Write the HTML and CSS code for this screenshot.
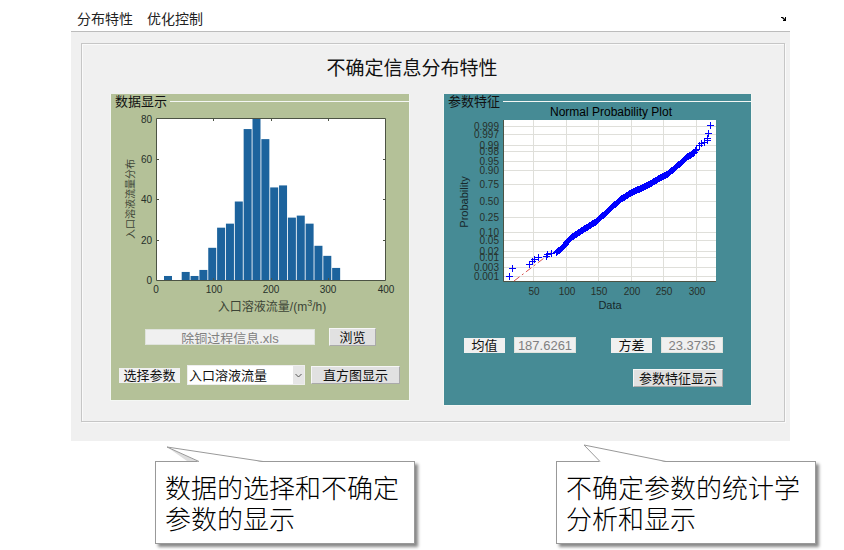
FILE: index.html
```html
<!DOCTYPE html>
<html lang="zh-CN">
<head>
<meta charset="utf-8">
<title>不确定信息分布特性</title>
<link rel="stylesheet" href="styles.css">
</head>
<body>
<main class="window">
  <nav class="menubar">
    <a href="#distribution">分布特性</a>
    <a href="#control">优化控制</a>
    <svg class="dock" viewBox="0 0 6 6" aria-hidden="true"><path d="M0 1h2l2 2V1h1v4H2V4h1L1 2H0z"/></svg>
  </nav>
  <section class="frame" id="distribution">
    <h1>不确定信息分布特性</h1>
    <div class="groups">
      <section class="group group-data">
        <h2>数据显示</h2>
        <svg class="chart" id="histogram" viewBox="111 109 298 211">
          <rect class="plot" x="157" y="119" width="229" height="161"/>
          <g id="bars"></g>
          <path class="axis" d="M156.500 118.500h229v162h-229zM213.500 280v-2M271.500 280v-2M328.500 280v-2M213.500 119v2M271.500 119v2M328.500 119v2M157 240.500h2M157 199.500h2M157 159.500h2M385 240.500h-2M385 199.500h-2M385 159.500h-2"/>
          <g class="tick end">
            <text x="152" y="123">80</text><text x="152" y="163">60</text><text x="152" y="203">40</text><text x="152" y="244">20</text><text x="152" y="284">0</text>
          </g>
          <g class="tick mid">
            <text x="156" y="293">0</text><text x="214" y="293">100</text><text x="271" y="293">200</text><text x="328" y="293">300</text><text x="386" y="293">400</text>
          </g>
          <text class="axis-name wide mid" x="272" y="311">入口溶液流量/(m<tspan class="sup" dy="-5">3</tspan><tspan dy="5">/h)</tspan></text>
          <text class="axis-name small mid" transform="translate(134 199) rotate(-90)">入口溶液流量分布</text>
        </svg>
        <div class="row file-row">
          <input class="file" type="text" aria-label="数据文件" value="除铜过程信息.xls" readonly>
          <button class="browse" type="button">浏览</button>
        </div>
        <div class="row param-row">
          <label for="param">选择参数</label>
          <div class="select-box">
            <select id="param"><option>入口溶液流量</option></select>
            <svg viewBox="0 0 11 18" aria-hidden="true"><path d="M2.500 8l3 3 3-3"/></svg>
          </div>
          <button class="show-hist" type="button">直方图显示</button>
        </div>
      </section>
      <section class="group group-stats">
        <h2>参数特征</h2>
        <svg class="chart" id="probability" viewBox="444 109 307 211">
          <rect class="plot" x="504" y="120" width="212" height="161"/>
          <g id="grid"></g>
          <path class="axis" d="M503.500 120v161.500H716"/>
          <path class="fit" d="M514 281L552 252"/>
          <path class="marks" id="marks"/>
          <g class="tick mid" id="x-ticks"></g>
          <g class="tick end" id="y-ticks"></g>
          <text class="plot-title mid" x="611" y="116">Normal Probability Plot</text>
          <text class="axis-name dark mid" x="610" y="309">Data</text>
          <text class="axis-name dark mid" transform="translate(468 202) rotate(-90)">Probability</text>
        </svg>
        <div class="row stat-row">
          <label for="mean">均值</label>
          <input id="mean" type="text" value="187.6261" readonly>
          <label class="second" for="variance">方差</label>
          <input id="variance" type="text" value="23.3735" readonly>
        </div>
        <div class="row action-row">
          <button class="show-stats" type="button">参数特征显示</button>
        </div>
      </section>
    </div>
  </section>
</main>
<aside class="notes">
  <div class="note">
    <svg class="tail tail-data" viewBox="0 0 100 20" aria-hidden="true"><path class="shade" d="M2 3L22 17H34z"/><path class="fill" d="M2 3L34 18V20H98V18z"/><path class="edge" d="M34 17.500L2 3L98 17.500"/></svg>
    <p>数据的选择和不确定参数的显示</p>
  </div>
  <div class="note">
    <svg class="tail tail-stats" viewBox="0 0 100 20" aria-hidden="true"><path class="fill" d="M2 1L18 18V20H84V18z"/><path class="edge" d="M18 17.500L2 1L84 17.500"/></svg>
    <p>不确定参数的统计学分析和显示</p>
  </div>
</aside>
<script src="charts.js"></script>
</body>
</html>
```
FILE: styles.css
```css
* { box-sizing: border-box; }

body {
  margin: 0;
  background: #fff;
  color: #111;
  font: 13px/15px "Liberation Sans", "Noto Sans CJK SC", sans-serif;
}

.window {
  margin: 0 54px 0 71px;
  background: #f0f0f0;
  padding-bottom: 19px;
}

.menubar {
  display: flex;
  align-items: center;
  gap: 14px;
  height: 32px;
  padding: 7px 3px 0 6px;
  background: #fff;
  border-bottom: 1px solid #bcbcbc;
  font-size: 14px;
}
.menubar a { color: #222; text-decoration: none; }
.dock { width: 6px; height: 6px; margin-left: auto; }

.frame {
  margin: 11px 5px 0 10px;
  padding: 15px 32px 15px 28px;
  border: 1px solid #c6c6c6;
  box-shadow: inset 1px 1px #fafafa, 1px 1px #fafafa;
}

h1 {
  margin: 0 0 15px;
  padding-right: 38px;
  font-size: 19px;
  line-height: 20px;
  font-weight: 400;
  text-align: center;
}

.groups {
  display: grid;
  grid-template-columns: minmax(0, 300fr) minmax(0, 309fr);
  gap: 33px;
  align-items: start;
}
.group {
  border: solid #f4f7f4;
  border-width: 0 1px 1px;
}
.group-data { background: #b4c198; padding-bottom: 15px; }
.group-stats { background: #468b95; padding-bottom: 18px; }

h2 {
  display: flex;
  align-items: center;
  gap: 3px;
  margin: 0;
  padding-left: 4px;
  font-size: 13px;
  line-height: 15px;
  font-weight: 400;
}
h2::after { content: ""; flex: 1; height: 1px; background: #f4f7f4; }

.chart {
  display: block;
  width: 100%;
  overflow: visible;
  font-family: "Liberation Sans", "Noto Sans CJK SC", sans-serif;
}
.plot { fill: #fff; }
.axis { fill: none; stroke: #4c5344; }
.bar { fill: #1c639d; }
.grid-line { stroke: #dfdfda; }
.fit { fill: none; stroke: #d9534f; stroke-dasharray: 7 3 2 3; }
.marks { fill: none; stroke: #00f; }
.tick { font-size: 10px; fill: #26302a; }
.mid { text-anchor: middle; }
.end { text-anchor: end; }
.axis-name { font-size: 11px; fill: #3c4436; }
.dark { fill: #17282b; }
.wide { font-size: 12px; }
.small { font-size: 10px; }
.sup { font-size: 9px; }
.plot-title { font-size: 12px; fill: #000; }

.row { display: flex; align-items: center; }
.file-row { margin-top: 8px; padding: 0 33px 0 34px; gap: 14px; }
.param-row { margin-top: 19px; padding: 0 9px 0 8px; }
.stat-row { margin-top: 17px; padding: 0 28px 0 20px; }
.action-row { margin-top: 16px; padding-right: 28px; justify-content: flex-end; }

input, select, button { font: inherit; border-radius: 0; }

input {
  min-width: 0;
  height: 16px;
  padding: 0;
  border: 1px solid #dfe3dc;
  background: #f0f0f0;
  color: #808080;
  text-align: center;
}
label {
  background: #f0f0f0;
  text-align: center;
}
button {
  height: 18px;
  padding: 0;
  border: 1px solid #f6f6f6;
  border-right-color: #aaa;
  border-bottom-color: #aaa;
  background: #e1e1e1;
  color: #111;
  line-height: 15px;
  white-space: nowrap;
}
.file { flex: 1; }
.browse { flex: none; width: 47px; }
.param-row label { flex: none; width: 61px; }
.select-box {
  position: relative;
  flex: 1;
  min-width: 0;
  height: 20px;
  margin: 0 6px 0 7px;
}
select {
  appearance: none;
  width: 100%;
  height: 20px;
  padding: 0 12px 0 1px;
  border: 1px solid #eee;
  background: #fff;
  color: #111;
}
.select-box svg {
  position: absolute;
  top: 1px;
  right: 1px;
  width: 11px;
  height: 18px;
  background: #e6e6e6;
  fill: none;
  stroke: #555;
  pointer-events: none;
}
.show-hist { flex: none; width: 89px; }
.stat-row label { width: 41px; }
.stat-row input { width: 62px; margin-left: 9px; }
.stat-row .second { margin-left: auto; }
.show-stats { width: 90px; }

.notes {
  display: flex;
  justify-content: space-between;
  align-items: flex-start;
  margin-top: 20px;
  padding: 0 28px 6px 155px;
}
.note {
  position: relative;
  width: 260px;
  padding: 9px 10px 10px 9px;
  background: #fff;
  border: 1px solid #999;
  box-shadow: 3px 3px 3px #888;
}
.note p {
  margin: 0;
  font: 26px/31px KaiTi, STKaiti, "Noto Sans CJK SC", sans-serif;
  font-weight: 300;
  color: #000;
}
.tail { position: absolute; top: -18px; width: 100px; height: 20px; }
.tail-data { left: 9px; }
.tail-stats { left: 25px; }
.tail .fill { fill: #fff; }
.tail .edge { fill: none; stroke: #999; }
.tail .shade { fill: #ddd; }
```
FILE: charts.js
```js
const SVG = "http://www.w3.org/2000/svg";

function add(parent, name, attrs, text) {
  const node = document.createElementNS(SVG, name);
  for (const key in attrs) node.setAttribute(key, attrs[key]);
  if (text) node.textContent = text;
  document.getElementById(parent).appendChild(node);
}

// Histogram: counts per bin
const counts = [2, 0, 4, 2, 5, 16, 26, 28, 39, 75, 80, 70, 46, 47, 31, 32, 28, 17, 12, 6];
counts.forEach((count, i) => {
  const height = count * 161 / 80;
  add("bars", "rect", { class: "bar", x: 164 + i * 8.85, y: 280 - height, width: 8, height });
});

// Probability plot: grid and tick labels
[50, 100, 150, 200, 250, 300].forEach((value, i) => {
  const x = Math.round(534 + i * 32.6);
  add("grid", "path", { class: "grid-line", d: `M${x - 0.5} 120v161` });
  add("x-ticks", "text", { x, y: 295 }, String(value));
});
const levels = [
  ["0.999", 126], ["0.997", 134], ["0.99", 145], ["0.98", 151], ["0.95", 161],
  ["0.90", 170], ["0.75", 184], ["0.50", 201], ["0.25", 217], ["0.10", 232],
  ["0.05", 240], ["0.02", 251], ["0.01", 257], ["0.003", 267], ["0.001", 276]
];
levels.forEach(([label, y]) => {
  add("grid", "path", { class: "grid-line", d: `M504 ${y + 0.5}h212` });
  add("y-ticks", "text", { x: 499, y: y + 4 }, label);
});

// Probability plot: sparse tails and the dense middle of the sample
const points = [
  [509, 276], [512, 268], [529, 264], [532, 261], [534, 259], [538, 257], [546, 256],
  [547, 254], [551, 253], [556, 252], [699, 145], [701, 143], [704, 142], [707, 140],
  [707, 138], [708, 133], [710, 125]
];
const curve = [
  [557, 251], [560, 249], [571, 237], [583, 229], [596, 221], [609, 209], [620, 199],
  [633, 191], [645, 186], [657, 179], [668, 173], [682, 161], [686, 157], [694, 152], [697, 147]
];
for (let i = 1; i < curve.length; i++) {
  const [x0, y0] = curve[i - 1];
  const [x1, y1] = curve[i];
  const steps = x1 - x0;
  for (let s = 0; s < steps; s++) {
    points.push([x0 + s, Math.round(y0 + (y1 - y0) * s / steps)]);
  }
}
document.getElementById("marks").setAttribute(
  "d", points.map(([x, y]) => `M${x - 3} ${y + 0.5}h7M${x + 0.5} ${y - 3}v7`).join("")
);
```
